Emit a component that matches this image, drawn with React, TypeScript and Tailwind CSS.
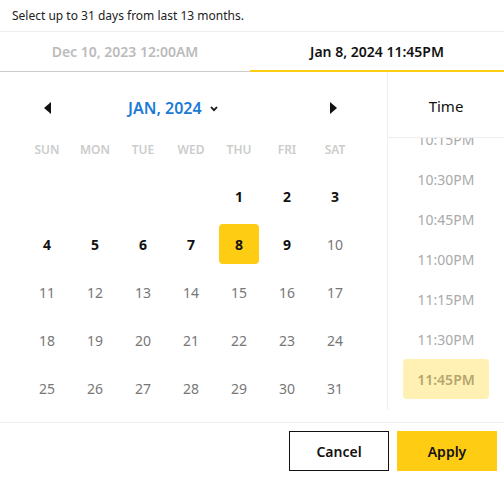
import React from "react";

const weekdays = ["SUN", "MON", "TUE", "WED", "THU", "FRI", "SAT"];
const times = ["10:15PM", "10:30PM", "10:45PM", "11:00PM", "11:15PM", "11:30PM", "11:45PM"];

// leading blanks, then the 31 days of the month
const cells: (number | null)[] = [null, null, null, null, 1, 2, 3];
for (let d = 4; d <= 31; d++) cells.push(d);

function Arrow({ dir }: { dir: "left" | "right" }) {
  return (
    <svg width="7" height="12" viewBox="0 0 7 12" className="block">
      {dir === "left" ? <path d="M7 0 L0 6 L7 12 Z" fill="#111" /> : <path d="M0 0 L7 6 L0 12 Z" fill="#111" />}
    </svg>
  );
}

export default function App() {
  return (
    <div
      className="w-[504px] h-[478px] bg-white text-black overflow-hidden"
      style={{ fontFamily: '"Noto Sans", "Open Sans", sans-serif' }}
    >
      {/* Hint */}
      <div className="h-[32px] px-[12px] flex items-center text-[12px] text-[#222] border-b border-[#eeeeee]">
        Select up to 31 days from last 13 months.
      </div>

      {/* Range tabs */}
      <div className="flex h-[40px]">
        <div className="w-[250px] flex items-center justify-center text-[14px] font-semibold text-[#bbbbbb] border-b border-[#cccccc]">
          Dec 10, 2023 12:00AM
        </div>
        <div className="flex-1 flex items-center justify-center text-[14px] font-semibold text-[#111] border-b-2 border-[#fecc12]">
          Jan 8, 2024 11:45PM
        </div>
      </div>

      {/* Body */}
      <div className="flex h-[351px] border-b border-[#eeeeee]">
        {/* Calendar */}
        <div className="w-[387px] pl-[23px] pt-[12px]">
          <div className="w-[334px] h-[48px] flex items-center">
            <div className="w-[48px] flex justify-center">
              <Arrow dir="left" />
            </div>
            <div className="flex-1 flex items-center gap-[8px] pl-[57px]">
              <span className="text-[16px] font-semibold text-[#1b7bd6]">JAN, 2024</span>
              <svg width="8" height="6" viewBox="0 0 8 6" className="mt-[2px]">
                <path d="M1 1 L4 4.2 L7 1" stroke="#111" strokeWidth="1.8" fill="none" />
              </svg>
            </div>
            <div className="w-[48px] flex justify-center">
              <Arrow dir="right" />
            </div>
          </div>

          <div className="grid grid-cols-[repeat(7,48px)] h-[24px] mt-[6px]">
            {weekdays.map((w) => (
              <div key={w} className="flex items-center justify-center text-[12px] font-semibold text-[#cccccc]">
                {w}
              </div>
            ))}
          </div>

          <div className="grid grid-cols-[repeat(7,48px)] mt-[10px]">
            {cells.map((d, i) => (
              <div key={i} className="h-[48px] flex items-center justify-center">
                {d !== null && (
                  <div
                    className={
                      d === 8
                        ? "w-[40px] h-[40px] rounded-[4px] bg-[#fecc12] flex items-center justify-center text-[14px] font-bold text-[#111]"
                        : d < 10
                        ? "text-[14px] font-bold text-[#111]"
                        : "text-[14px] text-[#777777]"
                    }
                  >
                    {d}
                  </div>
                )}
              </div>
            ))}
          </div>
        </div>

        {/* Time */}
        <div className="flex-1 h-[338px] border-l border-[#eeeeee] flex flex-col overflow-hidden">
          <div className="h-[66px] flex items-center justify-center pt-[4px] text-[15px] text-[#111] border-b border-[#eeeeee] shrink-0 bg-white relative z-10">
            Time
          </div>
          <div className="-mt-[19px]">
            {times.map((t) => (
              <div key={t} className="h-[40px] flex items-center justify-center">
                {t === "11:45PM" ? (
                  <div className="w-[86px] h-[40px] rounded-[4px] bg-[#fff0b3] flex items-center justify-center text-[14px] font-semibold text-[#b5a670]">
                    {t}
                  </div>
                ) : (
                  <span className="text-[14px] text-[#aaaaaa]">{t}</span>
                )}
              </div>
            ))}
          </div>
        </div>
      </div>

      {/* Actions */}
      <div className="flex justify-end gap-[8px] pt-[8px] pr-[7px]">
        <button className="w-[100px] h-[40px] border border-[#111] bg-white text-[14px] font-semibold text-[#111]">
          Cancel
        </button>
        <button className="w-[100px] h-[40px] bg-[#fecc12] text-[14px] font-semibold text-[#111]">
          Apply
        </button>
      </div>
    </div>
  );
}
